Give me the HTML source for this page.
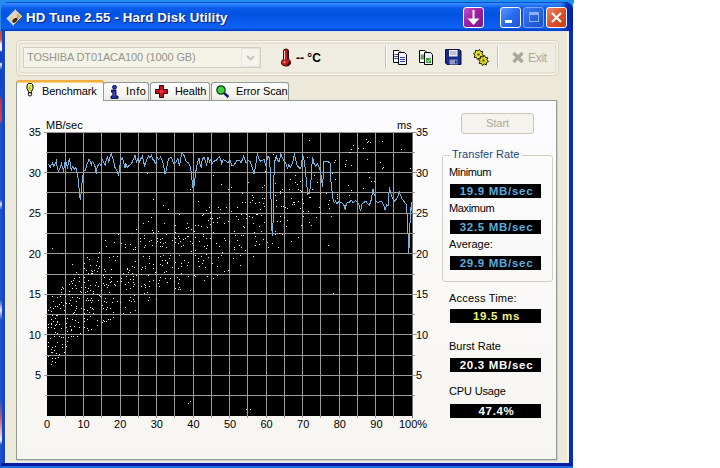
<!DOCTYPE html>
<html><head><meta charset="utf-8">
<style>
*{margin:0;padding:0;box-sizing:border-box}
html,body{width:720px;height:468px;overflow:hidden;background:#fff}
body{position:relative;font-family:"Liberation Sans",sans-serif;font-size:11px;color:#000}
.a{position:absolute}
#desk-top{left:0;top:0;width:574px;height:3px;background:#2090f0}
#desk-left{left:0;top:0;width:2px;height:468px;background:linear-gradient(#2a8ae6 0,#2a8ae6 30px,#c04a30 32px,#d06040 40px,#f0f0f0 44px,#f8f8f8 50px,#1040c0 52px,#1040c0 62px,#f0f0f0 64px,#1040c0 70px,#1848c8 96px,#c03040 100px,#d04050 120px,#2050c8 124px,#2050c8 200px,#e0e0f0 204px,#2050c8 210px,#2050c8 300px,#e8e8f0 310px,#2050c8 320px,#2050c8 400px,#d06070 420px,#f0f0f0 440px,#2050c8 445px)}
#frame{left:1px;top:2px;width:572px;height:470px;background:linear-gradient(90deg,#1848c8 0,#1040c0 4px,#0a34c0 540px,#0a2cb0 100%);border-radius:8px 8px 0 0;border:1px solid #0a30b0}
#title{left:1px;top:2px;width:572px;height:29px;border-radius:8px 8px 0 0;background:linear-gradient(90deg,rgba(0,30,160,0) 560px,rgba(0,36,170,0.85) 566px,#0020a0 572px),linear-gradient(#0a50c8 0px,#0a50c8 1px,#3a8cff 1px,#2a7cfc 3px,#0a5cec 6px,#0052e0 12px,#0858ea 19px,#0c62f4 26px,#0850d8 27px,#003cb0 29px)}
#ttext{left:26px;top:10px;font-weight:bold;font-size:13.5px;color:#fff;text-shadow:1px 1px 0 #0a1f80;white-space:nowrap;letter-spacing:0.15px;transform:scaleX(0.98);transform-origin:0 0}
#client{left:5px;top:31px;width:564px;height:432px;background:#ece9d8;box-shadow:inset 0 1px 0 #d8e4fc,inset 1px 0 0 #f4f6ff,inset -2px 0 0 #f2f2f4,inset 0 -1px 0 #e0ecff}
#bottomb{left:1px;top:463px;width:572px;height:5px;background:linear-gradient(#0a20a0 0,#0018a0 3px,#1468e0 3px,#1870e0 5px)}
.tb{width:21px;height:21px;top:7px;border:1px solid #fff;border-radius:3px}
#bpurple{left:463px;background:linear-gradient(135deg,#c850c8,#a020a0 45%,#781888)}
#bmin{left:500px;background:linear-gradient(135deg,#5a98ff,#2a6af0 50%,#1c56dc)}
#bmax{left:523px;background:linear-gradient(135deg,#3a78f0,#2a62e0 50%,#1c50c8);border-color:#7aa6f4}
#bclose{left:546px;background:linear-gradient(135deg,#f08a68,#e0502c 50%,#c83c18)}
#rebar{left:16px;top:40px;width:543px;height:36px;border:1px solid #d6d2c2;border-radius:4px;box-shadow:inset 0 0 0 1px #f6f5ee, inset 0 0 0 2px #ece9d8, inset 0 0 0 3px #e0ddd0;background:#efede2}
#combo{left:23px;top:47px;width:238px;height:21px;border:1px solid #d2cfbf;background:#f4f3e8}
#combotext{left:27px;top:51px;color:#96948a;font-size:11px;letter-spacing:-0.13px;white-space:nowrap}
#combobtn{left:241px;top:48px;width:19px;height:19px;background:#f4f3ee;border:1px solid #e6e4da}
.sep{width:1px;height:22px;top:46px;background:#c5c2b2;box-shadow:1px 0 0 #fff}
#temp{left:296px;top:51px;font-weight:bold;font-size:12px;white-space:nowrap}
#exit{left:528px;top:51px;color:#aca899;font-size:12px;letter-spacing:-0.3px}
.tab{top:82px;height:19px;border:1px solid #919b9c;border-bottom:none;border-radius:3px 3px 0 0;background:linear-gradient(#fefefe,#f4f3ee 70%,#e8e6dc)}
#tab1{left:16px;top:80px;width:88px;height:21px;background:linear-gradient(#fcfcfe,#fcfcfe);border-top:2px solid #f0b040;box-shadow:inset 0 1px 0 #fcd080;z-index:3}
#tab2{left:103px;width:46px}
#tab3{left:150px;width:60px}
#tab4{left:211px;width:78px}
.tabt{top:85px;white-space:nowrap;font-size:11px;letter-spacing:-0.1px;z-index:4}
#panel{left:16px;top:100px;width:541px;height:360px;border:1px solid #919b9c;background:linear-gradient(#fcfcfe,#f6f5f1);box-shadow:1px 1px 0 #d0cec0;z-index:2}
#chart{left:0;top:0;width:720px;height:468px;z-index:5}
.yl{position:absolute;left:0;width:41px;text-align:right;font-size:11px;z-index:6}
.yr{position:absolute;left:416px;font-size:11px;z-index:6}
.xl{position:absolute;top:418px;width:60px;text-align:center;font-size:11px;z-index:6}
.tk{position:absolute;width:3px;height:1px;background:#808080;z-index:6}
#mbsec{left:46px;top:119px;font-size:11px;z-index:6}
#ms{left:397px;top:119px;font-size:11px;z-index:6}
#start{left:461px;top:113px;width:73px;height:21px;border:1px solid #c9c7ba;border-radius:3px;background:#f4f3ee;color:#aca899;text-align:center;line-height:18px;font-size:11px;z-index:6}
#group{left:442px;top:155px;width:111px;height:127px;border:1px solid #d0d0bf;border-radius:3px;z-index:6}
#gtitle{left:450px;top:148px;padding:0 2px;color:#21497f;background:#fafafb;font-size:11px;letter-spacing:0.05px;white-space:nowrap;z-index:7}
.lbl{position:absolute;left:449px;font-size:11px;white-space:nowrap;z-index:7;letter-spacing:-0.35px;margin-top:1px}
.box{position:absolute;left:450px;width:91px;height:14px;background:#000;z-index:7;text-align:center;font-weight:bold;font-size:11.5px;letter-spacing:0.7px;text-indent:2px;line-height:15px;white-space:nowrap}
.blue{color:#5aacdc}
.yel{color:#f0f080}
.wht{color:#fff}
</style></head><body>
<div class="a" id="desk-top"></div><div class="a" style="left:0;top:0;width:16px;height:16px;background:#2090f0"></div><div class="a" style="left:560px;top:0;width:13px;height:10px;background:#2090f0"></div>
<div class="a" id="frame"></div>
<div class="a" id="desk-left"></div>
<div class="a" id="title"></div>
<svg class="a" style="left:6px;top:9px" width="18" height="17" viewBox="0 0 18 17">
<g transform="rotate(-45 9 8.5)"><rect x="2.5" y="3.5" width="13" height="10" fill="#d8e8fa" stroke="#a8c8f0" stroke-width="1"/><rect x="4" y="5" width="10" height="7" fill="#c8a878"/><rect x="4" y="5" width="10" height="3" fill="#e8d0a0"/><circle cx="9.5" cy="7.5" r="2.2" fill="#f0d8b8"/><ellipse cx="7" cy="10.5" rx="3" ry="1.8" fill="#402810"/><path d="M2.5 13.5 H15.5 V3.5" fill="none" stroke="#103070" stroke-width="1"/></g>
</svg>
<div class="a" id="ttext">HD Tune 2.55 - Hard Disk Utility</div>
<div class="a tb" id="bpurple"><svg width="19" height="19" viewBox="0 0 19 19" style="display:block"><path d="M9.5 2 V12" stroke="#fff" stroke-width="2"/><path d="M3.5 10.5 L9.5 17 L15.5 10.5 Z" fill="#fff"/></svg></div>
<div class="a tb" id="bmin"><div style="position:absolute;left:4px;top:12px;width:7px;height:3px;background:#fff"></div></div>
<div class="a tb" id="bmax"><div style="position:absolute;left:5px;top:4px;width:10px;height:10px;border:1px solid #8cb0f4;border-top:3px solid #8cb0f4"></div></div>
<div class="a tb" id="bclose"><svg width="19" height="19" viewBox="0 0 19 19" style="display:block"><path d="M5 5 L14 14 M14 5 L5 14" stroke="#fff" stroke-width="2.2"/></svg></div>
<div class="a" id="client"></div>
<div class="a" id="bottomb"></div>

<div class="a" id="rebar"></div>
<div class="a" id="combo"></div>
<div class="a" id="combotext">TOSHIBA DT01ACA100 (1000 GB)</div>
<div class="a" id="combobtn"><svg width="17" height="17" viewBox="0 0 17 17" style="display:block"><path d="M5 7 L8.5 10.5 L12 7" stroke="#c8c6bc" stroke-width="2" fill="none"/></svg></div>
<svg class="a" style="left:280px;top:48px" width="12" height="19" viewBox="0 0 12 19">
<path d="M3.5 11 V3 Q3.5 1 6 1 Q8.5 1 8.5 3 V11 Q10.5 12.5 10.5 14.5 Q10.5 18 6 18 Q1.5 18 1.5 14.5 Q1.5 12.5 3.5 11 Z" fill="#d01818" stroke="#300000" stroke-width="1"/>
<path d="M4.5 3 V11.5" stroke="#f8d0d0" stroke-width="1"/><path d="M8 2.5 V11.5 M9.5 13 Q10 16 7 17.3" stroke="#200000" stroke-width="1.2" fill="none"/><circle cx="4.5" cy="14.2" r="1" fill="#f0a0a0"/>
</svg>
<div class="a" id="temp">-- °C</div>
<div class="a sep" style="left:385px"></div>
<svg class="a" style="left:392px;top:49px" width="17" height="17" viewBox="0 0 17 17">
<path d="M1.5 1.5 H7 L8.5 3 V13.5 H1.5 Z" fill="#fff" stroke="#000"/><path d="M2.5 5.5H6M2.5 7.5H6M2.5 9.5H6" stroke="#3040a0"/>
<path d="M6.5 3.5 H12.5 L14.5 5.5 V15.5 H6.5 Z" fill="#eef0ff" stroke="#000"/><path d="M8 8.5H13M8 10.5H13M8 12.5H13" stroke="#3040a0"/>
</svg>
<svg class="a" style="left:418px;top:49px" width="17" height="17" viewBox="0 0 17 17">
<path d="M1.5 1.5 H7 L8.5 3 V13.5 H1.5 Z" fill="#fff" stroke="#000"/><rect x="2.5" y="5.5" width="4" height="5" fill="#60a860"/>
<path d="M6.5 3.5 H12.5 L14.5 5.5 V15.5 H6.5 Z" fill="#eef0ff" stroke="#000"/><rect x="8" y="9" width="5" height="5" fill="#40a040"/><path d="M9 11.5 L10.5 12.8 L12.5 10" stroke="#c0f0a0" stroke-width="1" fill="none"/>
</svg>
<svg class="a" style="left:445px;top:49px" width="17" height="17" viewBox="0 0 17 17">
<path d="M0.5 0.5 H14.5 L16 2 V15.5 H2 L0.5 14 Z" fill="#1a2a88" stroke="#0a1050"/><rect x="4" y="1" width="8.5" height="6.5" fill="#f0f0f4"/><path d="M5 3H11.5M5 5H11.5" stroke="#9098b8"/><rect x="4.5" y="10.5" width="8" height="5" fill="#9098c8"/><rect x="10" y="11.5" width="1.6" height="3" fill="#1a2a88"/>
</svg>
<svg class="a" style="left:472px;top:49px" width="18" height="18" viewBox="0 0 18 18">
<path d="M11.60,6.53 L9.49,7.51 L9.37,9.83 L7.19,9.03 L5.47,10.60 L4.49,8.49 L2.17,8.37 L2.97,6.19 L1.40,4.47 L3.51,3.49 L3.63,1.17 L5.81,1.97 L7.53,0.40 L8.51,2.51 L10.83,2.63 L10.03,4.81 Z" fill="#e8e030" stroke="#202000" stroke-width="1"/><circle cx="6.5" cy="5.5" r="1.2" fill="#605800"/>
<path d="M16.60,12.53 L14.49,13.51 L14.37,15.83 L12.19,15.03 L10.47,16.60 L9.49,14.49 L7.17,14.37 L7.97,12.19 L6.40,10.47 L8.51,9.49 L8.63,7.17 L10.81,7.97 L12.53,6.40 L13.51,8.51 L15.83,8.63 L15.03,10.81 Z" fill="#d8d820" stroke="#202000" stroke-width="1"/><circle cx="11.5" cy="11.5" r="1.2" fill="#605800"/>
</svg>
<div class="a sep" style="left:497px"></div>
<svg class="a" style="left:511px;top:51px" width="14" height="13" viewBox="0 0 14 13"><path d="M2.5 2 L11.5 11 M11.5 2 L2.5 11" stroke="#a8a698" stroke-width="3.2"/></svg>
<div class="a" id="exit">Exit</div>

<div class="a tab" id="tab2"></div>
<div class="a tab" id="tab3"></div>
<div class="a tab" id="tab4"></div>
<div class="a" id="panel"></div>
<div class="a tab" id="tab1"></div>
<svg class="a" style="left:26px;top:83px;z-index:5" width="8" height="14" viewBox="0 0 8 14">
<path d="M2.5 0.5 H5.5 L7 2 V5.5 L5.5 8.5 V9.5 H2.5 V8.5 L1 5.5 V2 Z" fill="#e8f060" stroke="#000" stroke-width="1"/><path d="M4.5 2 L3 6 L4.5 5.5 L4 8" stroke="#a0b020" stroke-width="1" fill="none"/>
<circle cx="4" cy="11.3" r="1.7" fill="#fff" stroke="#000" stroke-width="1"/>
</svg>
<div class="a tabt" style="left:42px">Benchmark</div>
<svg class="a" style="left:110px;top:85px;z-index:5" width="9" height="14" viewBox="0 0 9 14">
<circle cx="4.5" cy="2.2" r="2" fill="#2838c8" stroke="#000030" stroke-width="0.8"/><path d="M1.5 5 H6 V11 H8 V13.5 H1 V11 H2.8 V7.2 H1.5 Z" fill="#2030b0" stroke="#000030" stroke-width="0.8"/><path d="M4.2 7 V11" stroke="#6070e0" stroke-width="0.8"/>
</svg>
<div class="a tabt" style="left:126px;letter-spacing:0.5px">Info</div>
<svg class="a" style="left:155px;top:85px;z-index:5" width="13" height="13" viewBox="0 0 13 13">
<path d="M4.5 0.5H8.5V4.5H12.5V8.5H8.5V12.5H4.5V8.5H0.5V4.5H4.5Z" fill="#c81020" stroke="#200000"/><rect x="5" y="5" width="3" height="3" fill="#e83040"/>
</svg>
<div class="a tabt" style="left:175px">Health</div>
<svg class="a" style="left:216px;top:85px;z-index:5" width="14" height="13" viewBox="0 0 14 13">
<circle cx="5" cy="5" r="4.2" fill="#40d040" stroke="#104010" stroke-width="1.2"/><path d="M8 8 L12.5 12" stroke="#102060" stroke-width="2.5"/>
</svg>
<div class="a tabt" style="left:236px">Error Scan</div>

<svg class="a" id="chart" width="720" height="468">
<rect x="47" y="132" width="366" height="284" fill="#000"/>
<g fill="#9e9a96" shape-rendering="crispEdges">
<rect x="46" y="132" width="369" height="1"/>
<rect x="46" y="152" width="369" height="1"/>
<rect x="46" y="172" width="369" height="1"/>
<rect x="46" y="192" width="369" height="1"/>
<rect x="46" y="213" width="369" height="1"/>
<rect x="46" y="233" width="369" height="1"/>
<rect x="46" y="253" width="369" height="1"/>
<rect x="46" y="274" width="369" height="1"/>
<rect x="46" y="294" width="369" height="1"/>
<rect x="46" y="314" width="369" height="1"/>
<rect x="46" y="334" width="369" height="1"/>
<rect x="46" y="355" width="369" height="1"/>
<rect x="46" y="375" width="369" height="1"/>
<rect x="46" y="395" width="369" height="1"/>
<rect x="44" y="132" width="2" height="1"/><rect x="415" y="132" width="2" height="1"/>
<rect x="44" y="172" width="2" height="1"/><rect x="415" y="172" width="2" height="1"/>
<rect x="44" y="213" width="2" height="1"/><rect x="415" y="213" width="2" height="1"/>
<rect x="44" y="253" width="2" height="1"/><rect x="415" y="253" width="2" height="1"/>
<rect x="44" y="294" width="2" height="1"/><rect x="415" y="294" width="2" height="1"/>
<rect x="44" y="334" width="2" height="1"/><rect x="415" y="334" width="2" height="1"/>
<rect x="44" y="375" width="2" height="1"/><rect x="415" y="375" width="2" height="1"/>
<rect x="65" y="132" width="1" height="286"/>
<rect x="83" y="132" width="1" height="286"/>
<rect x="101" y="132" width="1" height="286"/>
<rect x="120" y="132" width="1" height="286"/>
<rect x="138" y="132" width="1" height="286"/>
<rect x="156" y="132" width="1" height="286"/>
<rect x="174" y="132" width="1" height="286"/>
<rect x="193" y="132" width="1" height="286"/>
<rect x="211" y="132" width="1" height="286"/>
<rect x="229" y="132" width="1" height="286"/>
<rect x="247" y="132" width="1" height="286"/>
<rect x="266" y="132" width="1" height="286"/>
<rect x="284" y="132" width="1" height="286"/>
<rect x="302" y="132" width="1" height="286"/>
<rect x="320" y="132" width="1" height="286"/>
<rect x="339" y="132" width="1" height="286"/>
<rect x="357" y="132" width="1" height="286"/>
<rect x="375" y="132" width="1" height="286"/>
<rect x="393" y="132" width="1" height="286"/>
<rect x="412" y="132" width="1" height="286" fill="#707070"/>
</g>
<g fill="#f4f4d0" shape-rendering="crispEdges"><rect x="48" y="310" width="1" height="1"/><rect x="48" y="324" width="1" height="1"/><rect x="48" y="327" width="1" height="1"/><rect x="48" y="342" width="1" height="1"/><rect x="48" y="346" width="1" height="1"/><rect x="48" y="356" width="1" height="1"/><rect x="50" y="307" width="1" height="1"/><rect x="50" y="338" width="1" height="1"/><rect x="51" y="311" width="1" height="1"/><rect x="51" y="319" width="1" height="1"/><rect x="51" y="323" width="1" height="1"/><rect x="51" y="324" width="1" height="1"/><rect x="51" y="327" width="1" height="1"/><rect x="51" y="349" width="1" height="1"/><rect x="51" y="352" width="1" height="1"/><rect x="51" y="364" width="1" height="1"/><rect x="52" y="248" width="1" height="1"/><rect x="52" y="296" width="1" height="1"/><rect x="52" y="315" width="1" height="1"/><rect x="52" y="347" width="1" height="1"/><rect x="52" y="352" width="1" height="1"/><rect x="52" y="358" width="1" height="1"/><rect x="52" y="361" width="1" height="1"/><rect x="53" y="301" width="1" height="1"/><rect x="53" y="308" width="1" height="1"/><rect x="53" y="321" width="1" height="1"/><rect x="54" y="328" width="1" height="1"/><rect x="54" y="336" width="1" height="1"/><rect x="54" y="350" width="1" height="1"/><rect x="55" y="306" width="1" height="1"/><rect x="55" y="318" width="1" height="1"/><rect x="55" y="325" width="1" height="1"/><rect x="55" y="332" width="1" height="1"/><rect x="55" y="346" width="1" height="1"/><rect x="55" y="358" width="1" height="1"/><rect x="55" y="362" width="1" height="1"/><rect x="56" y="315" width="1" height="1"/><rect x="56" y="324" width="1" height="1"/><rect x="56" y="353" width="1" height="1"/><rect x="57" y="297" width="1" height="1"/><rect x="57" y="306" width="1" height="1"/><rect x="57" y="315" width="1" height="1"/><rect x="57" y="321" width="1" height="1"/><rect x="57" y="322" width="1" height="1"/><rect x="57" y="333" width="1" height="1"/><rect x="57" y="342" width="1" height="1"/><rect x="58" y="357" width="1" height="1"/><rect x="59" y="304" width="1" height="1"/><rect x="59" y="324" width="1" height="1"/><rect x="59" y="336" width="1" height="1"/><rect x="59" y="354" width="1" height="1"/><rect x="60" y="296" width="1" height="1"/><rect x="60" y="308" width="1" height="1"/><rect x="61" y="289" width="1" height="1"/><rect x="61" y="292" width="1" height="1"/><rect x="61" y="294" width="1" height="1"/><rect x="61" y="302" width="1" height="1"/><rect x="61" y="328" width="1" height="1"/><rect x="61" y="337" width="1" height="1"/><rect x="62" y="253" width="1" height="1"/><rect x="62" y="287" width="1" height="1"/><rect x="62" y="344" width="1" height="1"/><rect x="62" y="347" width="1" height="1"/><rect x="63" y="288" width="1" height="1"/><rect x="63" y="305" width="1" height="1"/><rect x="63" y="337" width="1" height="1"/><rect x="64" y="294" width="1" height="1"/><rect x="64" y="310" width="1" height="1"/><rect x="64" y="352" width="1" height="1"/><rect x="65" y="296" width="1" height="1"/><rect x="65" y="302" width="1" height="1"/><rect x="65" y="306" width="1" height="1"/><rect x="65" y="318" width="1" height="1"/><rect x="65" y="344" width="1" height="1"/><rect x="66" y="303" width="1" height="1"/><rect x="66" y="323" width="1" height="1"/><rect x="66" y="327" width="1" height="1"/><rect x="66" y="346" width="1" height="1"/><rect x="67" y="318" width="1" height="1"/><rect x="67" y="331" width="1" height="1"/><rect x="67" y="341" width="1" height="1"/><rect x="68" y="337" width="1" height="1"/><rect x="69" y="284" width="1" height="1"/><rect x="69" y="291" width="1" height="1"/><rect x="69" y="294" width="1" height="1"/><rect x="69" y="303" width="1" height="1"/><rect x="70" y="300" width="1" height="1"/><rect x="70" y="326" width="1" height="1"/><rect x="71" y="281" width="1" height="1"/><rect x="71" y="305" width="1" height="1"/><rect x="71" y="329" width="1" height="1"/><rect x="71" y="330" width="1" height="1"/><rect x="71" y="336" width="1" height="1"/><rect x="72" y="264" width="1" height="1"/><rect x="72" y="283" width="1" height="1"/><rect x="72" y="288" width="1" height="1"/><rect x="72" y="297" width="1" height="1"/><rect x="72" y="319" width="1" height="1"/><rect x="73" y="280" width="1" height="1"/><rect x="73" y="313" width="1" height="1"/><rect x="73" y="336" width="1" height="1"/><rect x="74" y="278" width="1" height="1"/><rect x="74" y="312" width="1" height="1"/><rect x="74" y="326" width="1" height="1"/><rect x="75" y="285" width="1" height="1"/><rect x="75" y="310" width="1" height="1"/><rect x="75" y="320" width="1" height="1"/><rect x="76" y="272" width="1" height="1"/><rect x="76" y="288" width="1" height="1"/><rect x="76" y="301" width="1" height="1"/><rect x="76" y="306" width="1" height="1"/><rect x="76" y="308" width="1" height="1"/><rect x="76" y="314" width="1" height="1"/><rect x="77" y="297" width="1" height="1"/><rect x="77" y="336" width="1" height="1"/><rect x="78" y="274" width="1" height="1"/><rect x="78" y="322" width="1" height="1"/><rect x="79" y="277" width="1" height="1"/><rect x="79" y="281" width="1" height="1"/><rect x="79" y="298" width="1" height="1"/><rect x="79" y="327" width="1" height="1"/><rect x="80" y="291" width="1" height="1"/><rect x="80" y="333" width="1" height="1"/><rect x="81" y="287" width="1" height="1"/><rect x="81" y="292" width="1" height="1"/><rect x="81" y="308" width="1" height="1"/><rect x="81" y="314" width="1" height="1"/><rect x="84" y="263" width="1" height="1"/><rect x="84" y="268" width="1" height="1"/><rect x="84" y="277" width="1" height="1"/><rect x="84" y="282" width="1" height="1"/><rect x="84" y="309" width="1" height="1"/><rect x="84" y="313" width="1" height="1"/><rect x="84" y="318" width="1" height="1"/><rect x="84" y="321" width="1" height="1"/><rect x="84" y="327" width="1" height="1"/><rect x="85" y="287" width="1" height="1"/><rect x="85" y="292" width="1" height="1"/><rect x="86" y="270" width="1" height="1"/><rect x="86" y="300" width="1" height="1"/><rect x="87" y="257" width="1" height="1"/><rect x="87" y="291" width="1" height="1"/><rect x="87" y="298" width="1" height="1"/><rect x="87" y="310" width="1" height="1"/><rect x="87" y="319" width="1" height="1"/><rect x="87" y="328" width="1" height="1"/><rect x="88" y="273" width="1" height="1"/><rect x="88" y="280" width="1" height="1"/><rect x="88" y="288" width="1" height="1"/><rect x="88" y="300" width="1" height="1"/><rect x="88" y="330" width="1" height="1"/><rect x="89" y="259" width="1" height="1"/><rect x="89" y="312" width="1" height="1"/><rect x="90" y="265" width="1" height="1"/><rect x="90" y="285" width="1" height="1"/><rect x="90" y="290" width="1" height="1"/><rect x="90" y="300" width="1" height="1"/><rect x="90" y="307" width="1" height="1"/><rect x="90" y="316" width="1" height="1"/><rect x="91" y="270" width="1" height="1"/><rect x="91" y="273" width="1" height="1"/><rect x="91" y="298" width="1" height="1"/><rect x="91" y="302" width="1" height="1"/><rect x="91" y="329" width="1" height="1"/><rect x="92" y="271" width="1" height="1"/><rect x="92" y="273" width="1" height="1"/><rect x="92" y="300" width="1" height="1"/><rect x="92" y="308" width="1" height="1"/><rect x="93" y="291" width="1" height="1"/><rect x="93" y="293" width="1" height="1"/><rect x="93" y="309" width="1" height="1"/><rect x="93" y="313" width="1" height="1"/><rect x="94" y="270" width="1" height="1"/><rect x="95" y="285" width="1" height="1"/><rect x="96" y="265" width="1" height="1"/><rect x="96" y="282" width="1" height="1"/><rect x="97" y="261" width="1" height="1"/><rect x="97" y="271" width="1" height="1"/><rect x="97" y="294" width="1" height="1"/><rect x="97" y="320" width="1" height="1"/><rect x="97" y="325" width="1" height="1"/><rect x="98" y="257" width="1" height="1"/><rect x="98" y="268" width="1" height="1"/><rect x="98" y="286" width="1" height="1"/><rect x="98" y="300" width="1" height="1"/><rect x="99" y="252" width="1" height="1"/><rect x="99" y="266" width="1" height="1"/><rect x="99" y="295" width="1" height="1"/><rect x="100" y="296" width="1" height="1"/><rect x="101" y="290" width="1" height="1"/><rect x="102" y="305" width="1" height="1"/><rect x="102" y="322" width="1" height="1"/><rect x="103" y="275" width="1" height="1"/><rect x="103" y="283" width="1" height="1"/><rect x="103" y="308" width="1" height="1"/><rect x="103" y="320" width="1" height="1"/><rect x="104" y="269" width="1" height="1"/><rect x="104" y="277" width="1" height="1"/><rect x="104" y="285" width="1" height="1"/><rect x="104" y="301" width="1" height="1"/><rect x="104" y="321" width="1" height="1"/><rect x="105" y="240" width="1" height="1"/><rect x="105" y="271" width="1" height="1"/><rect x="105" y="298" width="1" height="1"/><rect x="106" y="246" width="1" height="1"/><rect x="106" y="284" width="1" height="1"/><rect x="106" y="302" width="1" height="1"/><rect x="106" y="309" width="1" height="1"/><rect x="106" y="314" width="1" height="1"/><rect x="106" y="321" width="1" height="1"/><rect x="107" y="287" width="1" height="1"/><rect x="107" y="307" width="1" height="1"/><rect x="108" y="285" width="1" height="1"/><rect x="108" y="319" width="1" height="1"/><rect x="109" y="257" width="1" height="1"/><rect x="109" y="279" width="1" height="1"/><rect x="109" y="292" width="1" height="1"/><rect x="110" y="282" width="1" height="1"/><rect x="110" y="308" width="1" height="1"/><rect x="110" y="319" width="1" height="1"/><rect x="111" y="269" width="1" height="1"/><rect x="111" y="277" width="1" height="1"/><rect x="111" y="281" width="1" height="1"/><rect x="112" y="302" width="1" height="1"/><rect x="113" y="256" width="1" height="1"/><rect x="113" y="298" width="1" height="1"/><rect x="113" y="312" width="1" height="1"/><rect x="113" y="317" width="1" height="1"/><rect x="114" y="242" width="1" height="1"/><rect x="114" y="284" width="1" height="1"/><rect x="115" y="260" width="1" height="1"/><rect x="115" y="285" width="1" height="1"/><rect x="117" y="256" width="1" height="1"/><rect x="117" y="281" width="1" height="1"/><rect x="117" y="301" width="1" height="1"/><rect x="118" y="234" width="1" height="1"/><rect x="120" y="302" width="1" height="1"/><rect x="121" y="243" width="1" height="1"/><rect x="121" y="278" width="1" height="1"/><rect x="121" y="281" width="1" height="1"/><rect x="123" y="273" width="1" height="1"/><rect x="123" y="313" width="1" height="1"/><rect x="125" y="244" width="1" height="1"/><rect x="125" y="247" width="1" height="1"/><rect x="125" y="284" width="1" height="1"/><rect x="125" y="307" width="1" height="1"/><rect x="126" y="276" width="1" height="1"/><rect x="126" y="289" width="1" height="1"/><rect x="127" y="268" width="1" height="1"/><rect x="127" y="269" width="1" height="1"/><rect x="128" y="272" width="1" height="1"/><rect x="128" y="282" width="1" height="1"/><rect x="129" y="270" width="1" height="1"/><rect x="129" y="300" width="1" height="1"/><rect x="130" y="244" width="1" height="1"/><rect x="130" y="279" width="1" height="1"/><rect x="130" y="288" width="1" height="1"/><rect x="130" y="297" width="1" height="1"/><rect x="130" y="312" width="1" height="1"/><rect x="131" y="301" width="1" height="1"/><rect x="132" y="233" width="1" height="1"/><rect x="132" y="266" width="1" height="1"/><rect x="132" y="273" width="1" height="1"/><rect x="133" y="249" width="1" height="1"/><rect x="133" y="276" width="1" height="1"/><rect x="133" y="279" width="1" height="1"/><rect x="133" y="282" width="1" height="1"/><rect x="133" y="286" width="1" height="1"/><rect x="133" y="299" width="1" height="1"/><rect x="134" y="267" width="1" height="1"/><rect x="134" y="284" width="1" height="1"/><rect x="134" y="295" width="1" height="1"/><rect x="134" y="301" width="1" height="1"/><rect x="135" y="247" width="1" height="1"/><rect x="135" y="249" width="1" height="1"/><rect x="135" y="261" width="1" height="1"/><rect x="135" y="310" width="1" height="1"/><rect x="136" y="229" width="1" height="1"/><rect x="136" y="275" width="1" height="1"/><rect x="138" y="297" width="1" height="1"/><rect x="140" y="238" width="1" height="1"/><rect x="140" y="241" width="1" height="1"/><rect x="141" y="269" width="1" height="1"/><rect x="141" y="274" width="1" height="1"/><rect x="141" y="286" width="1" height="1"/><rect x="142" y="267" width="1" height="1"/><rect x="143" y="223" width="1" height="1"/><rect x="143" y="256" width="1" height="1"/><rect x="144" y="235" width="1" height="1"/><rect x="144" y="238" width="1" height="1"/><rect x="144" y="247" width="1" height="1"/><rect x="144" y="284" width="1" height="1"/><rect x="144" y="293" width="1" height="1"/><rect x="145" y="245" width="1" height="1"/><rect x="145" y="266" width="1" height="1"/><rect x="145" y="268" width="1" height="1"/><rect x="145" y="285" width="1" height="1"/><rect x="145" y="287" width="1" height="1"/><rect x="147" y="173" width="1" height="1"/><rect x="147" y="292" width="1" height="1"/><rect x="148" y="221" width="1" height="1"/><rect x="148" y="275" width="1" height="1"/><rect x="148" y="300" width="1" height="1"/><rect x="149" y="241" width="1" height="1"/><rect x="149" y="256" width="1" height="1"/><rect x="149" y="258" width="1" height="1"/><rect x="149" y="263" width="1" height="1"/><rect x="149" y="281" width="1" height="1"/><rect x="149" y="286" width="1" height="1"/><rect x="149" y="297" width="1" height="1"/><rect x="151" y="217" width="1" height="1"/><rect x="151" y="240" width="1" height="1"/><rect x="152" y="230" width="1" height="1"/><rect x="152" y="245" width="1" height="1"/><rect x="153" y="199" width="1" height="1"/><rect x="153" y="232" width="1" height="1"/><rect x="153" y="264" width="1" height="1"/><rect x="153" y="268" width="1" height="1"/><rect x="153" y="280" width="1" height="1"/><rect x="155" y="272" width="1" height="1"/><rect x="156" y="299" width="1" height="1"/><rect x="157" y="238" width="1" height="1"/><rect x="157" y="241" width="1" height="1"/><rect x="158" y="231" width="1" height="1"/><rect x="158" y="283" width="1" height="1"/><rect x="159" y="280" width="1" height="1"/><rect x="159" y="286" width="1" height="1"/><rect x="160" y="239" width="1" height="1"/><rect x="160" y="242" width="1" height="1"/><rect x="160" y="246" width="1" height="1"/><rect x="160" y="256" width="1" height="1"/><rect x="160" y="264" width="1" height="1"/><rect x="160" y="277" width="1" height="1"/><rect x="162" y="238" width="1" height="1"/><rect x="162" y="246" width="1" height="1"/><rect x="162" y="260" width="1" height="1"/><rect x="162" y="265" width="1" height="1"/><rect x="163" y="205" width="1" height="1"/><rect x="163" y="243" width="1" height="1"/><rect x="163" y="255" width="1" height="1"/><rect x="164" y="223" width="1" height="1"/><rect x="164" y="272" width="1" height="1"/><rect x="165" y="242" width="1" height="1"/><rect x="165" y="260" width="1" height="1"/><rect x="165" y="278" width="1" height="1"/><rect x="166" y="234" width="1" height="1"/><rect x="166" y="247" width="1" height="1"/><rect x="166" y="271" width="1" height="1"/><rect x="167" y="262" width="1" height="1"/><rect x="167" y="263" width="1" height="1"/><rect x="167" y="282" width="1" height="1"/><rect x="168" y="209" width="1" height="1"/><rect x="169" y="258" width="1" height="1"/><rect x="170" y="255" width="1" height="1"/><rect x="170" y="278" width="1" height="1"/><rect x="172" y="240" width="1" height="1"/><rect x="172" y="267" width="1" height="1"/><rect x="174" y="281" width="1" height="1"/><rect x="175" y="225" width="1" height="1"/><rect x="175" y="232" width="1" height="1"/><rect x="175" y="238" width="1" height="1"/><rect x="175" y="242" width="1" height="1"/><rect x="175" y="262" width="1" height="1"/><rect x="175" y="288" width="1" height="1"/><rect x="177" y="277" width="1" height="1"/><rect x="178" y="236" width="1" height="1"/><rect x="178" y="243" width="1" height="1"/><rect x="178" y="268" width="1" height="1"/><rect x="178" y="283" width="1" height="1"/><rect x="178" y="289" width="1" height="1"/><rect x="179" y="214" width="1" height="1"/><rect x="179" y="238" width="1" height="1"/><rect x="179" y="255" width="1" height="1"/><rect x="179" y="279" width="1" height="1"/><rect x="179" y="287" width="1" height="1"/><rect x="180" y="241" width="1" height="1"/><rect x="180" y="289" width="1" height="1"/><rect x="181" y="246" width="1" height="1"/><rect x="181" y="263" width="1" height="1"/><rect x="181" y="266" width="1" height="1"/><rect x="181" y="273" width="1" height="1"/><rect x="183" y="239" width="1" height="1"/><rect x="183" y="245" width="1" height="1"/><rect x="184" y="260" width="1" height="1"/><rect x="185" y="238" width="1" height="1"/><rect x="186" y="228" width="1" height="1"/><rect x="187" y="223" width="1" height="1"/><rect x="187" y="236" width="1" height="1"/><rect x="187" y="265" width="1" height="1"/><rect x="188" y="227" width="1" height="1"/><rect x="188" y="236" width="1" height="1"/><rect x="188" y="262" width="1" height="1"/><rect x="188" y="276" width="1" height="1"/><rect x="188" y="403" width="1" height="1"/><rect x="190" y="189" width="1" height="1"/><rect x="190" y="241" width="1" height="1"/><rect x="190" y="290" width="1" height="1"/><rect x="190" y="401" width="1" height="1"/><rect x="191" y="229" width="1" height="1"/><rect x="191" y="251" width="1" height="1"/><rect x="192" y="243" width="1" height="1"/><rect x="193" y="245" width="1" height="1"/><rect x="194" y="231" width="1" height="1"/><rect x="194" y="275" width="1" height="1"/><rect x="195" y="225" width="1" height="1"/><rect x="195" y="237" width="1" height="1"/><rect x="195" y="250" width="1" height="1"/><rect x="195" y="255" width="1" height="1"/><rect x="195" y="276" width="1" height="1"/><rect x="198" y="201" width="1" height="1"/><rect x="198" y="225" width="1" height="1"/><rect x="198" y="258" width="1" height="1"/><rect x="198" y="261" width="1" height="1"/><rect x="199" y="241" width="1" height="1"/><rect x="199" y="266" width="1" height="1"/><rect x="201" y="226" width="1" height="1"/><rect x="201" y="256" width="1" height="1"/><rect x="202" y="215" width="1" height="1"/><rect x="202" y="263" width="1" height="1"/><rect x="203" y="214" width="1" height="1"/><rect x="203" y="234" width="1" height="1"/><rect x="203" y="236" width="1" height="1"/><rect x="203" y="260" width="1" height="1"/><rect x="204" y="246" width="1" height="1"/><rect x="204" y="280" width="1" height="1"/><rect x="205" y="267" width="1" height="1"/><rect x="206" y="210" width="1" height="1"/><rect x="206" y="238" width="1" height="1"/><rect x="206" y="248" width="1" height="1"/><rect x="206" y="254" width="1" height="1"/><rect x="207" y="227" width="1" height="1"/><rect x="207" y="245" width="1" height="1"/><rect x="207" y="276" width="1" height="1"/><rect x="208" y="220" width="1" height="1"/><rect x="208" y="257" width="1" height="1"/><rect x="209" y="207" width="1" height="1"/><rect x="210" y="212" width="1" height="1"/><rect x="210" y="218" width="1" height="1"/><rect x="210" y="224" width="1" height="1"/><rect x="210" y="238" width="1" height="1"/><rect x="211" y="253" width="1" height="1"/><rect x="212" y="218" width="1" height="1"/><rect x="212" y="263" width="1" height="1"/><rect x="213" y="175" width="1" height="1"/><rect x="213" y="222" width="1" height="1"/><rect x="213" y="232" width="1" height="1"/><rect x="213" y="278" width="1" height="1"/><rect x="216" y="243" width="1" height="1"/><rect x="217" y="218" width="1" height="1"/><rect x="217" y="222" width="1" height="1"/><rect x="217" y="266" width="1" height="1"/><rect x="217" y="275" width="1" height="1"/><rect x="218" y="207" width="1" height="1"/><rect x="218" y="257" width="1" height="1"/><rect x="219" y="217" width="1" height="1"/><rect x="219" y="246" width="1" height="1"/><rect x="220" y="209" width="1" height="1"/><rect x="221" y="184" width="1" height="1"/><rect x="221" y="255" width="1" height="1"/><rect x="222" y="252" width="1" height="1"/><rect x="224" y="213" width="1" height="1"/><rect x="224" y="223" width="1" height="1"/><rect x="224" y="238" width="1" height="1"/><rect x="224" y="271" width="1" height="1"/><rect x="225" y="240" width="1" height="1"/><rect x="226" y="207" width="1" height="1"/><rect x="228" y="189" width="1" height="1"/><rect x="228" y="221" width="1" height="1"/><rect x="228" y="270" width="1" height="1"/><rect x="229" y="241" width="1" height="1"/><rect x="229" y="243" width="1" height="1"/><rect x="231" y="187" width="1" height="1"/><rect x="231" y="211" width="1" height="1"/><rect x="233" y="258" width="1" height="1"/><rect x="234" y="231" width="1" height="1"/><rect x="234" y="247" width="1" height="1"/><rect x="234" y="249" width="1" height="1"/><rect x="235" y="235" width="1" height="1"/><rect x="236" y="216" width="1" height="1"/><rect x="237" y="207" width="1" height="1"/><rect x="237" y="240" width="1" height="1"/><rect x="238" y="219" width="1" height="1"/><rect x="239" y="245" width="1" height="1"/><rect x="240" y="255" width="1" height="1"/><rect x="240" y="265" width="1" height="1"/><rect x="241" y="214" width="1" height="1"/><rect x="241" y="235" width="1" height="1"/><rect x="241" y="247" width="1" height="1"/><rect x="242" y="193" width="1" height="1"/><rect x="242" y="202" width="1" height="1"/><rect x="243" y="226" width="1" height="1"/><rect x="243" y="235" width="1" height="1"/><rect x="244" y="227" width="1" height="1"/><rect x="245" y="202" width="1" height="1"/><rect x="245" y="250" width="1" height="1"/><rect x="246" y="214" width="1" height="1"/><rect x="246" y="218" width="1" height="1"/><rect x="246" y="409" width="1" height="1"/><rect x="248" y="182" width="1" height="1"/><rect x="249" y="216" width="1" height="1"/><rect x="250" y="202" width="1" height="1"/><rect x="250" y="409" width="1" height="1"/><rect x="252" y="195" width="1" height="1"/><rect x="252" y="200" width="1" height="1"/><rect x="252" y="217" width="1" height="1"/><rect x="253" y="197" width="1" height="1"/><rect x="253" y="223" width="1" height="1"/><rect x="253" y="256" width="1" height="1"/><rect x="254" y="232" width="1" height="1"/><rect x="255" y="203" width="1" height="1"/><rect x="255" y="236" width="1" height="1"/><rect x="255" y="245" width="1" height="1"/><rect x="256" y="214" width="1" height="1"/><rect x="256" y="241" width="1" height="1"/><rect x="257" y="214" width="1" height="1"/><rect x="259" y="202" width="1" height="1"/><rect x="259" y="226" width="1" height="1"/><rect x="259" y="244" width="1" height="1"/><rect x="260" y="209" width="1" height="1"/><rect x="261" y="215" width="1" height="1"/><rect x="261" y="231" width="1" height="1"/><rect x="262" y="187" width="1" height="1"/><rect x="262" y="198" width="1" height="1"/><rect x="263" y="203" width="1" height="1"/><rect x="263" y="239" width="1" height="1"/><rect x="264" y="185" width="1" height="1"/><rect x="264" y="198" width="1" height="1"/><rect x="264" y="206" width="1" height="1"/><rect x="264" y="222" width="1" height="1"/><rect x="265" y="171" width="1" height="1"/><rect x="267" y="242" width="1" height="1"/><rect x="268" y="247" width="1" height="1"/><rect x="272" y="243" width="1" height="1"/><rect x="273" y="154" width="1" height="1"/><rect x="275" y="183" width="1" height="1"/><rect x="275" y="195" width="1" height="1"/><rect x="275" y="231" width="1" height="1"/><rect x="275" y="234" width="1" height="1"/><rect x="276" y="200" width="1" height="1"/><rect x="276" y="206" width="1" height="1"/><rect x="277" y="221" width="1" height="1"/><rect x="278" y="247" width="1" height="1"/><rect x="279" y="233" width="1" height="1"/><rect x="280" y="191" width="1" height="1"/><rect x="280" y="193" width="1" height="1"/><rect x="280" y="216" width="1" height="1"/><rect x="280" y="221" width="1" height="1"/><rect x="281" y="206" width="1" height="1"/><rect x="282" y="189" width="1" height="1"/><rect x="282" y="234" width="1" height="1"/><rect x="283" y="206" width="1" height="1"/><rect x="284" y="196" width="1" height="1"/><rect x="284" y="217" width="1" height="1"/><rect x="285" y="207" width="1" height="1"/><rect x="286" y="226" width="1" height="1"/><rect x="287" y="208" width="1" height="1"/><rect x="287" y="220" width="1" height="1"/><rect x="289" y="189" width="1" height="1"/><rect x="290" y="179" width="1" height="1"/><rect x="291" y="198" width="1" height="1"/><rect x="291" y="241" width="1" height="1"/><rect x="292" y="204" width="1" height="1"/><rect x="293" y="202" width="1" height="1"/><rect x="294" y="202" width="1" height="1"/><rect x="294" y="204" width="1" height="1"/><rect x="295" y="175" width="1" height="1"/><rect x="295" y="182" width="1" height="1"/><rect x="297" y="184" width="1" height="1"/><rect x="298" y="189" width="1" height="1"/><rect x="298" y="201" width="1" height="1"/><rect x="298" y="237" width="1" height="1"/><rect x="300" y="181" width="1" height="1"/><rect x="300" y="190" width="1" height="1"/><rect x="300" y="208" width="1" height="1"/><rect x="301" y="191" width="1" height="1"/><rect x="301" y="225" width="1" height="1"/><rect x="302" y="180" width="1" height="1"/><rect x="302" y="199" width="1" height="1"/><rect x="303" y="203" width="1" height="1"/><rect x="303" y="211" width="1" height="1"/><rect x="303" y="216" width="1" height="1"/><rect x="307" y="157" width="1" height="1"/><rect x="308" y="211" width="1" height="1"/><rect x="309" y="140" width="1" height="1"/><rect x="309" y="197" width="1" height="1"/><rect x="309" y="222" width="1" height="1"/><rect x="310" y="197" width="1" height="1"/><rect x="311" y="225" width="1" height="1"/><rect x="312" y="189" width="1" height="1"/><rect x="314" y="175" width="1" height="1"/><rect x="316" y="217" width="1" height="1"/><rect x="317" y="182" width="1" height="1"/><rect x="319" y="207" width="1" height="1"/><rect x="320" y="193" width="1" height="1"/><rect x="320" y="212" width="1" height="1"/><rect x="326" y="193" width="1" height="1"/><rect x="328" y="204" width="1" height="1"/><rect x="328" y="245" width="1" height="1"/><rect x="329" y="200" width="1" height="1"/><rect x="329" y="208" width="1" height="1"/><rect x="331" y="216" width="1" height="1"/><rect x="332" y="173" width="1" height="1"/><rect x="333" y="293" width="1" height="1"/><rect x="334" y="162" width="1" height="1"/><rect x="335" y="160" width="1" height="1"/><rect x="335" y="179" width="1" height="1"/><rect x="337" y="194" width="1" height="1"/><rect x="337" y="196" width="1" height="1"/><rect x="337" y="198" width="1" height="1"/><rect x="345" y="164" width="1" height="1"/><rect x="345" y="166" width="1" height="1"/><rect x="346" y="160" width="1" height="1"/><rect x="348" y="185" width="1" height="1"/><rect x="349" y="152" width="1" height="1"/><rect x="349" y="195" width="1" height="1"/><rect x="350" y="152" width="1" height="1"/><rect x="351" y="149" width="1" height="1"/><rect x="351" y="165" width="1" height="1"/><rect x="351" y="190" width="1" height="1"/><rect x="353" y="145" width="1" height="1"/><rect x="358" y="148" width="1" height="1"/><rect x="363" y="148" width="1" height="1"/><rect x="363" y="188" width="1" height="1"/><rect x="366" y="139" width="1" height="1"/><rect x="367" y="142" width="1" height="1"/><rect x="367" y="159" width="1" height="1"/><rect x="368" y="141" width="1" height="1"/><rect x="368" y="172" width="1" height="1"/><rect x="369" y="177" width="1" height="1"/><rect x="370" y="142" width="1" height="1"/><rect x="371" y="181" width="1" height="1"/><rect x="374" y="181" width="1" height="1"/><rect x="380" y="162" width="1" height="1"/><rect x="382" y="141" width="1" height="1"/><rect x="382" y="168" width="1" height="1"/><rect x="383" y="167" width="1" height="1"/><rect x="401" y="149" width="1" height="1"/><rect x="410" y="168" width="1" height="1"/></g>
<polyline points="47.9,163.5 48.9,165.1 50.2,167.6 51.1,165.1 52.4,163.1 53.7,166 55,164.4 56.3,161.2 57.5,169.2 58.5,171.2 59.8,168.6 61.4,163.5 62.7,168.3 63.6,170.5 64.6,163.8 65.6,160.3 66.5,164.1 67.5,168.6 68.4,162.2 69.6,158 70.4,166 71.3,170.5 72.3,166.7 73.6,168 74.8,169.9 75.8,167.3 76.8,171.8 77.7,175.6 78.6,183 79.6,195 80.4,200 81.4,190 82.5,177.6 83.8,171.2 85.4,170.2 87.1,164 89.2,159.1 90.25,161.2 91.3,164.7 92.3,161.5 93.7,162.9 95.1,166.75 96.2,173.7 97.2,166.75 98.6,164.7 99.6,163.3 101,165.7 102.4,159.8 103.8,162.6 105.2,164.7 106.2,160.2 107.6,157 108.7,162.6 110,157 111.4,153.6 112.5,157.7 113.5,159.8 114.6,166.75 115.9,168.8 117.3,171.6 118.4,175.8 119.4,169.5 120.8,160.5 122.2,157.7 123.6,161.9 125,168.1 125.7,162.6 127.1,167.4 129.1,165.4 131.2,164 132,162.6 133.4,159.1 135.1,155.3 136.5,162.9 137.9,158.1 139.3,161.9 140.7,159.1 142.4,156.3 143.5,161.9 144.8,166 146.9,159.1 148.7,156 150.1,157.7 151.4,154.9 152.8,159.1 154.2,160.8 156,164.3 157.3,157.7 158.7,159.8 160.5,157 162.6,161.2 163.9,167.4 165,173.7 166.4,169.5 167.4,164 168.5,159.1 170.2,157.7 171.6,157.7 173,161.9 174.4,164 176.1,161.9 177.8,158.4 179.6,166 181.3,154.9 182.1,152.9 184.2,155.6 185.6,159.8 186.6,161.9 188.3,162.6 190.1,166 191.1,171.6 192.3,183 193.4,190 194.4,184 195.3,175 196.3,168.8 197.7,161.9 199.1,157.7 200.1,164.7 201.2,166.75 202.2,159.8 204,157 205.3,161.2 206.7,164.7 208.1,157 209.5,161.9 210.9,159.1 211.9,164.7 213.3,161.2 215.8,160.8 217.8,158.4 219.6,157 221,160.5 221.7,163.3 223.1,159.8 225.1,160.5 227.9,162.6 230.1,160.5 232.2,166 234.25,164.7 236.7,160.8 239.5,160.5 241.2,162.6 243.6,156.3 246,163.3 248.1,160.5 250.2,161.9 252,166.75 254,173.7 255.8,165.4 256.5,158.4 257.5,154.25 258.9,159.1 260.6,161.2 262.7,160.2 264.1,159.8 265.8,165.4 267.9,156.3 269.7,158.4 270.7,185 271.6,225 272.3,235.6 273.2,220 274,175 274.6,161.9 276.3,156.3 277.4,159.8 279.1,161.9 280.9,153.6 282.6,158.4 284.3,161.2 286.1,164 287.5,168.1 288.8,164.7 290.6,167.4 292.7,161.9 294.4,154.9 295.8,159.8 296.8,164.7 298.2,166.75 300,168.8 301,167.4 302.7,155.6 303.8,158.4 304.8,165.4 305.9,175.8 307.7,194 309.6,193 311,180 311.8,167.4 312.5,157 313.8,163.3 315.6,166 317.7,164 319.75,168.1 321.2,176 322.5,187.3 323.2,176 323.6,161.2 325.3,161.9 328,161.5 330,163 330.8,180.6 332.2,192.1 333.2,200.8 334.6,202.7 335.6,200.8 337,203.7 338.5,201.7 340.4,202.7 342.3,203.2 344.2,205.6 345.2,209.8 346.4,203.5 347.8,202.1 349.5,202.1 351.25,200.4 353.3,202.8 355.4,200.4 357.5,202.8 359.2,205.6 360.6,211.2 362,204.2 363.4,202.5 365.8,201.4 367.6,203.5 369.3,204.9 370.7,202.1 371.7,197.3 373.1,188.9 373.8,193.1 374.9,195.9 375.9,200.75 377.6,202.8 379.7,201.4 381.8,201.4 383.9,205.6 385,209.8 386.7,204.9 388.4,205.6 388.75,195.9 389.4,187.6 390.5,191.7 391.5,195.9 392.9,198.7 394.3,201.4 396.8,198.8 399.4,192 402,198.8 404.5,202.2 406.2,204 407.1,214.2 407.9,231.3 408.8,254.4 409.6,231.3 410.5,212.5 411.4,202.2 412.2,213.3" fill="none" stroke="#74b4de" stroke-width="1" shape-rendering="crispEdges"/>
</svg>
<div class="yl" style="top:126.0px">35</div><div class="yr" style="top:126.0px">35</div><div class="yl" style="top:166.6px">30</div><div class="yr" style="top:166.6px">30</div><div class="yl" style="top:207.1px">25</div><div class="yr" style="top:207.1px">25</div><div class="yl" style="top:247.7px">20</div><div class="yr" style="top:247.7px">20</div><div class="yl" style="top:288.3px">15</div><div class="yr" style="top:288.3px">15</div><div class="yl" style="top:328.9px">10</div><div class="yr" style="top:328.9px">10</div><div class="yl" style="top:369.4px">5</div><div class="yr" style="top:369.4px">5</div>
<div class="xl" style="left:17.0px">0</div><div class="xl" style="left:53.6px">10</div><div class="xl" style="left:90.2px">20</div><div class="xl" style="left:126.8px">30</div><div class="xl" style="left:163.4px">40</div><div class="xl" style="left:200.0px">50</div><div class="xl" style="left:236.6px">60</div><div class="xl" style="left:273.2px">70</div><div class="xl" style="left:309.8px">80</div><div class="xl" style="left:346.4px">90</div><div class="xl" style="left:383.0px">100%</div>
<div class="a" id="mbsec">MB/sec</div>
<div class="a" id="ms">ms</div>
<div class="a" id="start">Start</div>
<div class="a" id="group"></div>
<div class="a" id="gtitle">Transfer Rate</div>
<div class="lbl" style="top:165px">Minimum</div>
<div class="box blue" style="top:184px">19.9 MB/sec</div>
<div class="lbl" style="top:201px">Maximum</div>
<div class="box blue" style="top:220px">32.5 MB/sec</div>
<div class="lbl" style="top:237px;letter-spacing:0">Average:</div>
<div class="box blue" style="top:256px">29.9 MB/sec</div>
<div class="lbl" style="top:291px;letter-spacing:0.2px">Access Time:</div>
<div class="box yel" style="top:309px">19.5 ms</div>
<div class="lbl" style="top:339px;letter-spacing:0">Burst Rate</div>
<div class="box wht" style="top:358px">20.3 MB/sec</div>
<div class="lbl" style="top:384px;letter-spacing:-0.15px">CPU Usage</div>
<div class="box wht" style="top:404px">47.4%</div>
</body></html>
